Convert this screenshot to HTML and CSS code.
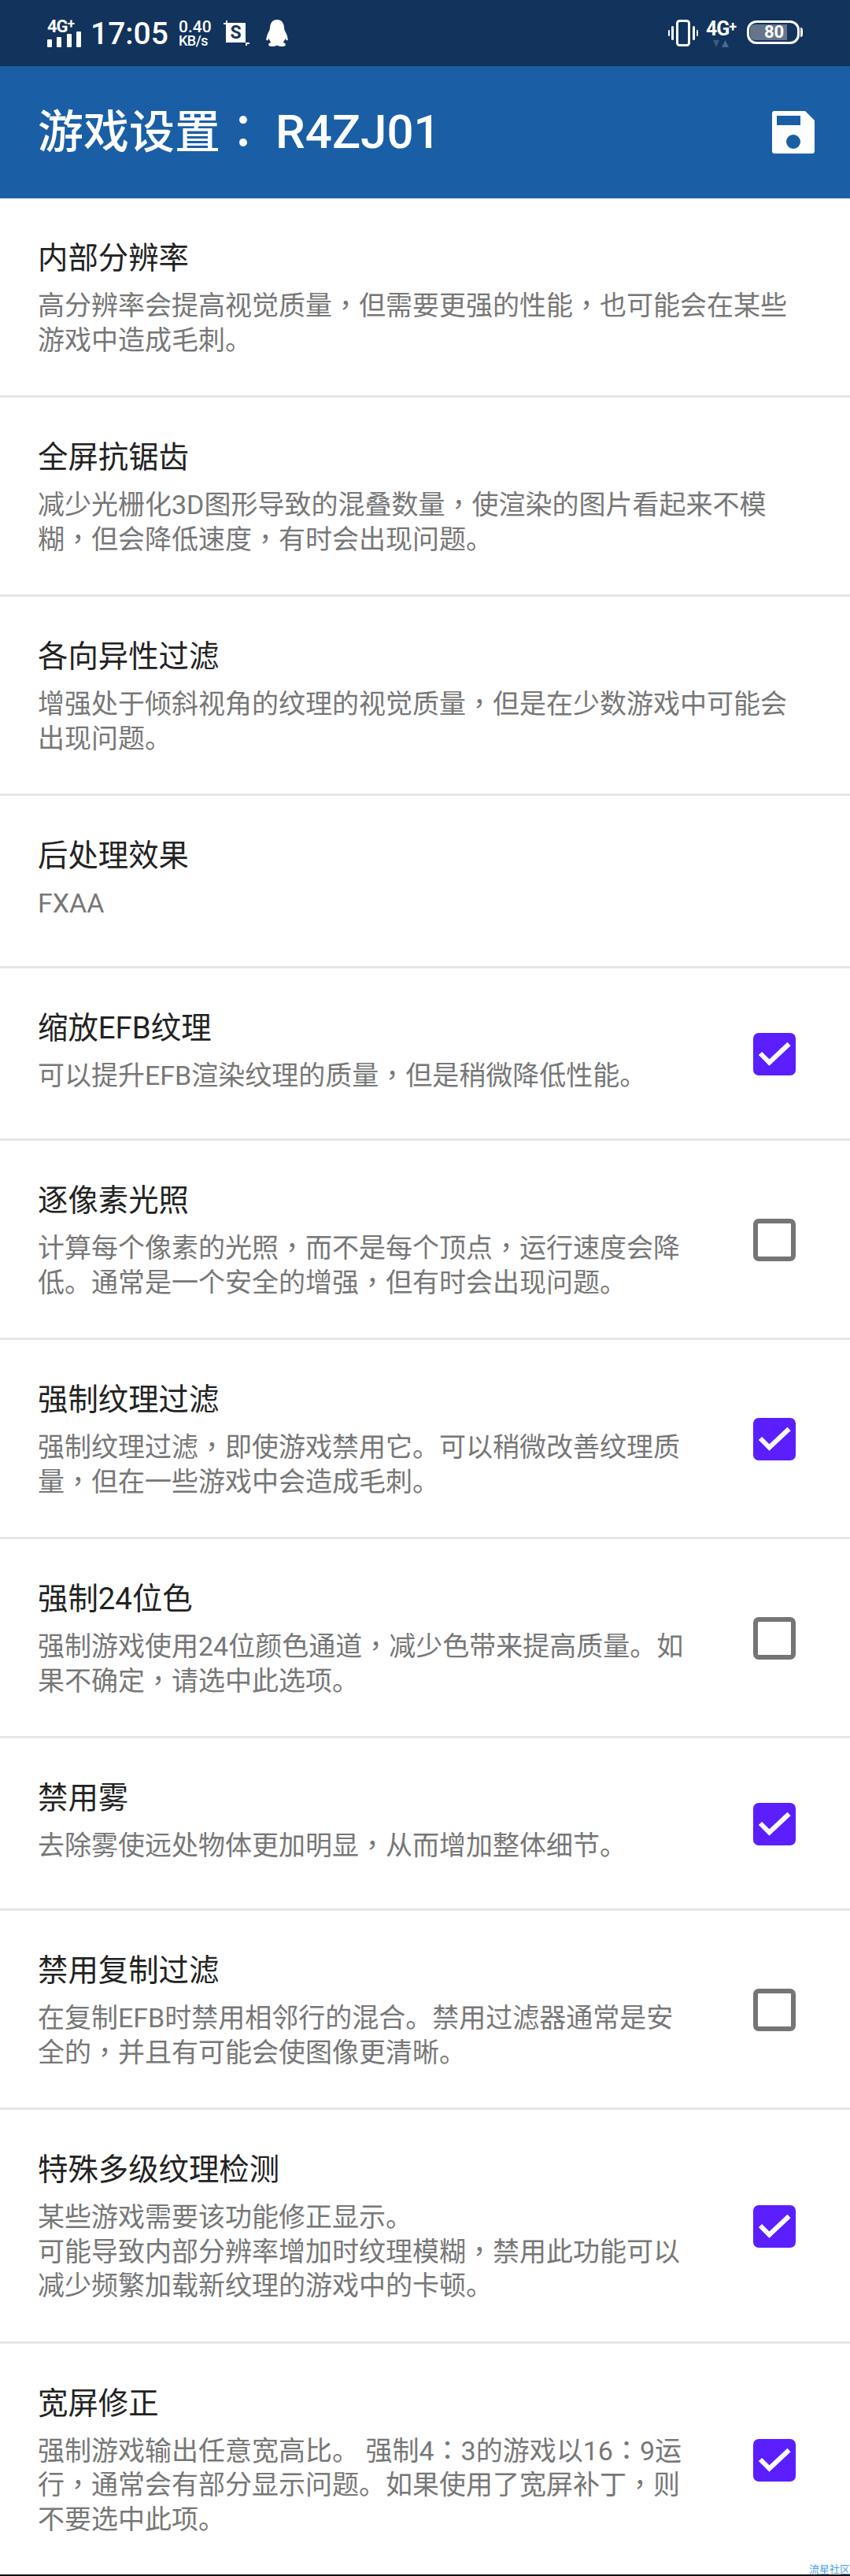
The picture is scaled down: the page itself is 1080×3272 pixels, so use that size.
FILE: index.html
```html
<!DOCTYPE html>
<html>
<head>
<meta charset="utf-8">
<title>游戏设置</title>
<link rel="stylesheet" href="styles.css">
</head>
<body>
<div class="page">
  <header class="statusbar">
    <div class="status-left">
      <div class="signal">
        <span class="signal-label">4G<sup>+</sup></span>
        <span class="bars"><i class="b1"></i><i class="b2"></i><i class="b3"></i><i class="b4"></i></span>
      </div>
      <span class="clock">17:05</span>
      <span class="speed"><b>0.40</b><b class="unit">KB/s</b></span>
      <svg class="ic-shot" width="33" height="32" viewBox="0 0 33 32"><path d="M3 0h2v3H3zM0 3h3v2H0z" fill="#fff"/><rect x="3" y="3" width="25" height="25" fill="#fff"/><path d="M28 28h5v2h-3v2h-2z" fill="#fff"/><text x="15.500" y="22.500" class="shot-s">S</text></svg>
      <svg class="ic-qq" width="30" height="34" viewBox="0 0 30 36"><path d="M15 0c6 0 9 4.500 9.500 10 .2 2.500.5 4 1.500 6 2 3.500 3.500 8 3.500 10.500 0 1.500-1 2-2.500 .5l-1-1.500c-.5 2-1.500 3.500-3 5 2 .7 3.500 1.500 3.500 3 0 1.500-2 2.500-5.500 2.500-3 0-5-.5-6-1.500-1 1-3 1.500-6 1.500-3.500 0-5.500-1-5.500-2.500 0-1.500 1.500-2.300 3.500-3-1.500-1.500-2.500-3-3-5l-1 1.500c-1.500 1.500-2.500 1-2.500-.5C.5 24 2 19.500 4 16c1-2 1.300-3.500 1.500-6C6 4.500 9 0 15 0z" fill="#fff"/></svg>
    </div>
    <div class="status-right">
      <svg class="ic-vib" width="38" height="34" viewBox="0 0 38 34"><rect x="11.500" y="1.500" width="15" height="31" rx="3" fill="none" stroke="#fff" stroke-width="3"/><path d="M5.500 9.500v15M32.500 9.500v15" stroke="#fff" stroke-width="3" stroke-linecap="round"/><path d="M1 14v6M37 14v6" stroke="#fff" stroke-width="2" stroke-linecap="round"/></svg>
      <div class="net">
        <span class="net-label">4G<sup>+</sup></span>
        <svg class="net-arrows" width="20" height="9" viewBox="0 0 20 9"><path d="M0 0h8L4 9z" fill="#3d5a80"/><path d="M11 9h9l-4.500-9z" fill="#4a6a93"/></svg>
      </div>
      <div class="battery">
        <span class="cell"><span class="cell-fill"></span><span class="cell-num">80</span></span>
        <i class="nub"></i>
      </div>
    </div>
  </header>

  <div class="appbar">
    <h1 class="appbar-title">游戏设置<span class="cp">：</span><span class="code">R4ZJ01</span></h1>
    <svg class="ic-save" width="54" height="54" viewBox="0 0 54 54"><path d="M3 0h39l12 12v39a3 3 0 0 1-3 3H3a3 3 0 0 1-3-3V3a3 3 0 0 1 3-3z" fill="#fff"/><rect x="6" y="6" width="30" height="12" fill="#1a5fa5"/><circle cx="27" cy="39" r="9" fill="#1a5fa5"/></svg>
  </div>

  <main class="list">
    <section class="row">
      <div class="text wide">
        <div class="name">内部分辨率</div>
        <div class="desc">高分辨率会提高视觉质量<span class="cp">，</span>但需要更强的性能<span class="cp">，</span>也可能会在某些<br>游戏中造成毛刺。</div>
      </div>
    </section>
    <section class="row">
      <div class="text wide">
        <div class="name">全屏抗锯齿</div>
        <div class="desc">减少光栅化3D图形导致的混叠数量<span class="cp">，</span>使渲染的图片看起来不模<br>糊<span class="cp">，</span>但会降低速度<span class="cp">，</span>有时会出现问题。</div>
      </div>
    </section>
    <section class="row">
      <div class="text wide">
        <div class="name">各向异性过滤</div>
        <div class="desc">增强处于倾斜视角的纹理的视觉质量<span class="cp">，</span>但是在少数游戏中可能会<br>出现问题。</div>
      </div>
    </section>
    <section class="row">
      <div class="text wide">
        <div class="name">后处理效果</div>
        <div class="desc">FXAA</div>
      </div>
    </section>
    <section class="row">
      <div class="text">
        <div class="name">缩放EFB纹理</div>
        <div class="desc">可以提升EFB渲染纹理的质量<span class="cp">，</span>但是稍微降低性能。</div>
      </div>
      <span class="box on"><svg width="54" height="54" viewBox="0 0 54 54"><path d="M9 26l11.500 11.500L45.500 14" fill="none" stroke="#fff" stroke-width="6"/></svg></span>
    </section>
    <section class="row">
      <div class="text">
        <div class="name">逐像素光照</div>
        <div class="desc">计算每个像素的光照<span class="cp">，</span>而不是每个顶点<span class="cp">，</span>运行速度会降<br>低。通常是一个安全的增强<span class="cp">，</span>但有时会出现问题。</div>
      </div>
      <span class="box"></span>
    </section>
    <section class="row">
      <div class="text">
        <div class="name">强制纹理过滤</div>
        <div class="desc">强制纹理过滤<span class="cp">，</span>即使游戏禁用它。可以稍微改善纹理质<br>量<span class="cp">，</span>但在一些游戏中会造成毛刺。</div>
      </div>
      <span class="box on"><svg width="54" height="54" viewBox="0 0 54 54"><path d="M9 26l11.500 11.500L45.500 14" fill="none" stroke="#fff" stroke-width="6"/></svg></span>
    </section>
    <section class="row">
      <div class="text">
        <div class="name">强制24位色</div>
        <div class="desc">强制游戏使用24位颜色通道<span class="cp">，</span>减少色带来提高质量。如<br>果不确定<span class="cp">，</span>请选中此选项。</div>
      </div>
      <span class="box"></span>
    </section>
    <section class="row">
      <div class="text">
        <div class="name">禁用雾</div>
        <div class="desc">去除雾使远处物体更加明显<span class="cp">，</span>从而增加整体细节。</div>
      </div>
      <span class="box on"><svg width="54" height="54" viewBox="0 0 54 54"><path d="M9 26l11.500 11.500L45.500 14" fill="none" stroke="#fff" stroke-width="6"/></svg></span>
    </section>
    <section class="row">
      <div class="text">
        <div class="name">禁用复制过滤</div>
        <div class="desc">在复制EFB时禁用相邻行的混合。禁用过滤器通常是安<br>全的<span class="cp">，</span>并且有可能会使图像更清晰。</div>
      </div>
      <span class="box"></span>
    </section>
    <section class="row">
      <div class="text">
        <div class="name">特殊多级纹理检测</div>
        <div class="desc">某些游戏需要该功能修正显示。<br>可能导致内部分辨率增加时纹理模糊<span class="cp">，</span>禁用此功能可以<br>减少频繁加载新纹理的游戏中的卡顿。</div>
      </div>
      <span class="box on"><svg width="54" height="54" viewBox="0 0 54 54"><path d="M9 26l11.500 11.500L45.500 14" fill="none" stroke="#fff" stroke-width="6"/></svg></span>
    </section>
    <section class="row last">
      <div class="text">
        <div class="name">宽屏修正</div>
        <div class="desc">强制游戏输出任意宽高比。 强制4<span class="cp">：</span>3的游戏以16<span class="cp">：</span>9运<br>行<span class="cp">，</span>通常会有部分显示问题。如果使用了宽屏补丁<span class="cp">，</span>则<br>不要选中此项。</div>
      </div>
      <span class="box on"><svg width="54" height="54" viewBox="0 0 54 54"><path d="M9 26l11.500 11.500L45.500 14" fill="none" stroke="#fff" stroke-width="6"/></svg></span>
    </section>
  </main>
  <div class="footer"></div>
  <span class="mark">流星社区</span>
</div>
</body>
</html>
```

FILE: styles.css
```css
* { box-sizing: border-box; }
html, body { margin: 0; padding: 0; background: #fff; }
body { font-family: Roboto, "Noto Sans CJK SC", sans-serif; }
.page { position: relative; width: 1080px; height: 3272px; overflow: hidden; display: flex; flex-direction: column; }
.cp { font-family: "Noto Sans CJK TC", sans-serif; line-height: 0; }

.statusbar { flex: none; height: 84px; background: #12335c; color: #fff; display: flex; justify-content: space-between; align-items: center; padding: 0 60px 0 60px; }
.status-left, .status-right { display: flex; align-items: center; }
.signal { width: 43px; height: 34px; display: flex; flex-direction: column; margin-top: 2px; }
.signal-label { font-size: 22px; line-height: 16px; font-weight: 700; letter-spacing: -1px; }
.signal-label sup { font-size: 17px; line-height: 0; vertical-align: 5px; }
.bars { display: flex; align-items: flex-end; justify-content: space-between; height: 20px; margin-top: -2px; }
.bars i { width: 6px; background: #fff; border-radius: 1px; }
.bars .b1 { height: 10px; }
.bars .b2 { height: 13px; }
.bars .b3 { height: 17px; }
.bars .b4 { height: 20px; }
.clock { font-size: 39px; font-weight: 500; margin-left: 12px; line-height: 44px; margin-top: 2px; }
.speed { display: flex; flex-direction: column; margin-left: 13px; line-height: 18px; margin-top: 1px; }
.speed b { font-size: 21px; font-weight: 500; }
.speed .unit { font-size: 18px; letter-spacing: -.5px; }
.ic-shot { margin-left: 15px; }
.shot-s { font: 700 23px Roboto, sans-serif; fill: #12335c; text-anchor: middle; }
.ic-qq { margin-left: 20px; }
.ic-vib { margin-right: 9px; }
.net { width: 40px; display: flex; flex-direction: column; align-items: center; margin-top: 1px; }
.net-label { font-size: 25px; line-height: 22px; font-weight: 700; letter-spacing: -1px; white-space: nowrap; }
.net-label sup { font-size: 18px; line-height: 0; vertical-align: 5px; }
.net-arrows { margin-top: 3px; }
.battery { display: flex; align-items: center; margin-left: 13px; margin-bottom: 2px; }
.cell { position: relative; width: 67px; height: 30px; border: 3px solid #fff; border-radius: 12px; display: block; overflow: hidden; }
.cell-fill { position: absolute; left: 1px; top: 2px; bottom: 2px; width: 47px; background: #66758c; border-radius: 6px 0 0 6px; }
.cell-num { position: relative; display: block; font-size: 22px; line-height: 24px; font-weight: 700; text-align: center; margin-left: 2px; }
.nub { width: 3px; height: 12px; background: #fff; border-radius: 0 3px 3px 0; margin-left: 1px; }

.appbar { flex: none; height: 168px; background: #1a5fa5; color: #fff; display: flex; justify-content: space-between; align-items: center; padding: 0 45px 0 48px; }
.appbar-title { margin: 0; font-size: 58px; font-weight: 500; line-height: 70px; }
.code { font-size: 60px; margin-left: 12px; }

.list { flex: none; display: flex; flex-direction: column; }
.row { flex: none; display: flex; align-items: flex-start; justify-content: space-between; border-bottom: 3px solid #e6e6e6; padding: 50px 69px 47.600px 48px; min-height: 219px; }
.row.last { border-bottom: none; }
.text { width: 860px; }
.text.wide { width: 984px; }
.name { font-size: 38.400px; line-height: 52px; color: #222; margin-bottom: 13px; }
.desc { font-size: 34px; line-height: 43.700px; color: #777; }
.box { width: 54px; height: 54px; border: 6px solid #757575; border-radius: 7px; align-self: center; flex: none; display: block; }
.box.on { border: none; background: #5a1eff; }
.box svg { display: block; }

.footer { flex: 1; background: #111; }
.mark { position: absolute; right: 0; bottom: 1px; font-size: 13px; line-height: 14px; color: #4a9fe8; white-space: nowrap; }
```
